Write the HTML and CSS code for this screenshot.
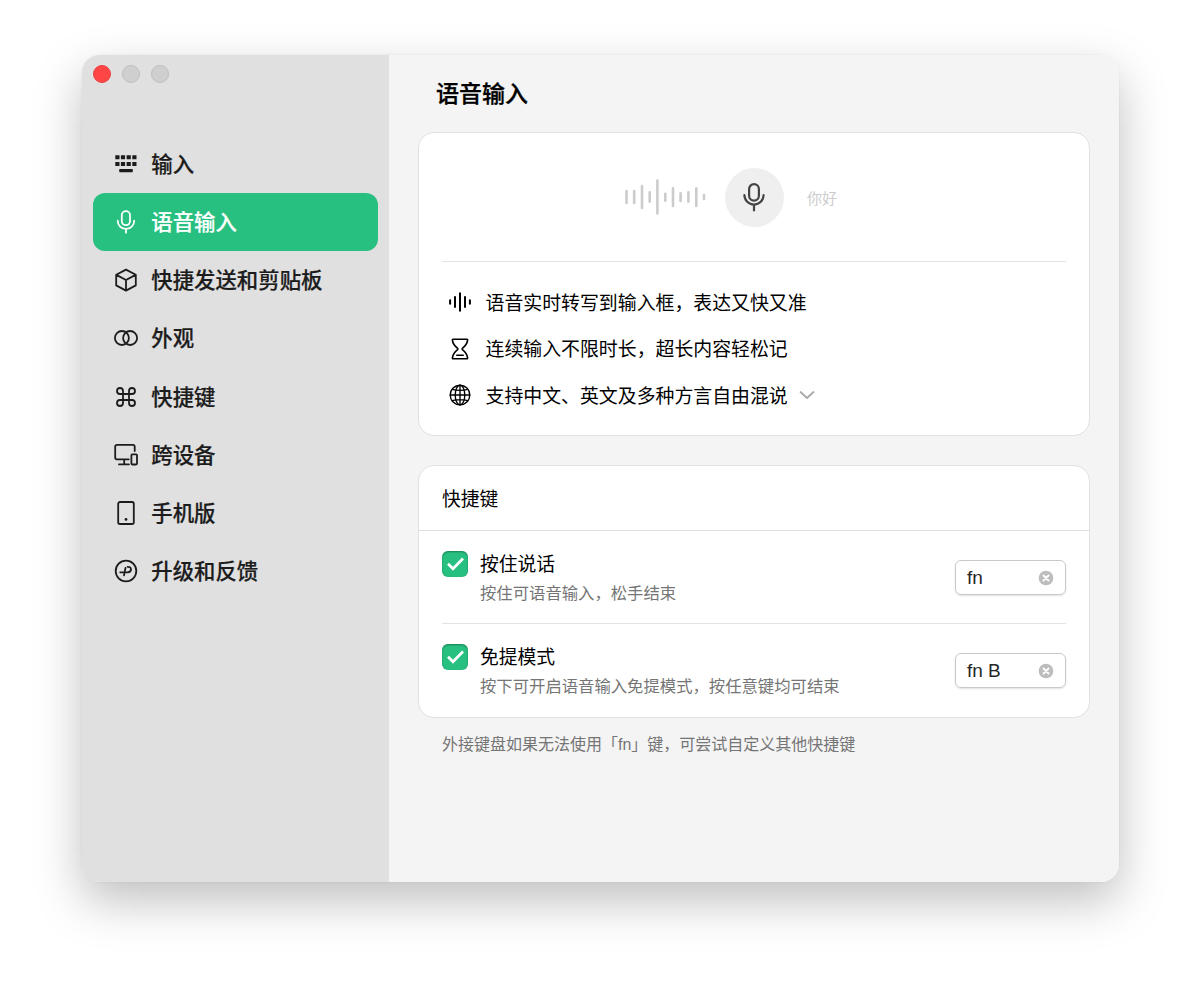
FILE: index.html
```html
<!DOCTYPE html>
<html lang="zh-CN">
<head>
  <meta charset="utf-8">
  <title>语音输入</title>
  <link rel="stylesheet" href="styles.css">
</head>
<body>
  <div class="window">
    <aside class="sidebar">
      <div class="lights">
        <span class="light close"></span>
        <span class="light"></span>
        <span class="light"></span>
      </div>
      <nav class="nav">
        <a class="nav-item">
          <svg class="icon solid" viewBox="0 0 24 24"><path d="M1.3 3.2h4.2v4H1.3zM6.9 3.2h4.2v4H6.9zM12.6 3.2h4.2v4h-4.2zM18.3 3.2h4.2v4h-4.2zM1.3 10h4.2v4H1.3zM6.9 10h4.2v4H6.9zM12.6 10h4.2v4h-4.2zM18.3 10h4.2v4h-4.2z"/><rect x="5.2" y="17" width="13.6" height="3.2" rx=".7"/></svg>
          <span>输入</span>
        </a>
        <a class="nav-item active">
          <svg class="icon" viewBox="0 0 24 24"><rect x="7.8" y="1.2" width="8.2" height="14" rx="4.1"/><path d="M3.7 10.7a8.25 8.25 0 0 0 16.5 0M12 19v3.7"/></svg>
          <span>语音输入</span>
        </a>
        <a class="nav-item">
          <svg class="icon" viewBox="0 0 24 24"><path d="M12 1.6l9.8 5.2v10.6L12 22.6l-9.8-5.2V6.8zM2.4 6.9L12 12l9.6-5.1M12 12v10.5"/></svg>
          <span>快捷发送和剪贴板</span>
        </a>
        <a class="nav-item">
          <svg class="icon" viewBox="0 0 24 24"><circle cx="7.9" cy="12" r="7"/><circle cx="16.1" cy="12" r="7"/></svg>
          <span>外观</span>
        </a>
        <a class="nav-item">
          <svg class="icon" viewBox="0 0 24 24"><path d="M9 9V6a3 3 0 1 0-3 3h12a3 3 0 1 0-3-3v12a3 3 0 1 0 3-3H6a3 3 0 1 0 3 3z"/></svg>
          <span>快捷键</span>
        </a>
        <a class="nav-item">
          <svg class="icon" viewBox="0 0 24 24"><path d="M20.7 8V3.6a1.8 1.8 0 0 0-1.8-1.8H3a1.8 1.8 0 0 0-1.8 1.8v10.9a1.8 1.8 0 0 0 1.8 1.8h11.8M10.2 16.3v5M5 21.4h9.9"/><rect x="17.4" y="11.3" width="5.6" height="10.2" rx=".9"/></svg>
          <span>跨设备</span>
        </a>
        <a class="nav-item">
          <svg class="icon" viewBox="0 0 24 24"><rect x="4.2" y="1" width="15.6" height="22" rx="1.8"/><circle class="dot" cx="12" cy="18.4" r="1.4"/></svg>
          <span>手机版</span>
        </a>
        <a class="nav-item">
          <svg class="icon" viewBox="0 0 24 24"><circle cx="12" cy="12" r="10.3"/><path d="M11.5 8.8L10 16.4M6.2 13.3h7.2c2.1 0 3.6-1.2 3.6-3s-1.5-2.6-3.4-2.5"/></svg>
          <span>升级和反馈</span>
        </a>
      </nav>
    </aside>

    <main class="content">
      <h1>语音输入</h1>

      <section class="card intro">
        <div class="demo">
          <svg class="wave" viewBox="0 0 84 40"><path d="M3.5 14v12M11.2 14v12M19 9v22M26.7 15.3v9.5M34.4 3.5v33M42.3 16.8v7M50 11.4v17.5M57.6 16.4v7.6M65.4 15.3v9.5M73.3 11.4v17.5M81 18v4"/></svg>
          <div class="mic">
            <svg viewBox="0 0 28 32"><rect x="9.1" y="3.2" width="9.8" height="16.4" rx="4.9"/><path d="M4.4 14a9.6 9.6 0 0 0 19.2 0M14 23.7v5.8"/></svg>
          </div>
          <span class="hello">你好</span>
        </div>
        <ul class="features">
          <li>
            <svg class="icon wavelet" viewBox="0 0 24 24"><path d="M2.1 10.2v3.6M7 7.1v9.8M12 3.2v17.6M17 7.1v9.8M21.9 10.2v3.6"/></svg>
            <span>语音实时转写到输入框，表达又快又准</span>
          </li>
          <li>
            <svg class="icon" viewBox="0 0 24 24"><path d="M5.2 2.2h13.6c.6 0 .9.4.8 1-.4 3.9-2 5.6-5.2 8.2-.4.4-.4.8 0 1.2 3.2 2.6 4.8 4.3 5.2 8.2.1.6-.2 1-.8 1H5.2c-.6 0-.9-.4-.8-1 .4-3.9 2-5.6 5.2-8.2.4-.4.4-.8 0-1.2-3.2-2.6-4.8-4.3-5.2-8.2-.1-.6.2-1 .8-1zM8.8 18.2h6.4"/></svg>
            <span>连续输入不限时长，超长内容轻松记</span>
          </li>
          <li>
            <svg class="icon globe" viewBox="0 0 24 24"><circle cx="12" cy="12" r="9.8"/><ellipse cx="12" cy="12" rx="4.8" ry="9.8"/><path d="M12 2.2v19.6M2.2 12h19.6M4.2 6.3c4.5 1.3 11.1 1.3 15.6 0M4.2 17.7c4.5-1.3 11.1-1.3 15.6 0"/></svg>
            <span>支持中文、英文及多种方言自由混说</span>
            <svg class="chevron" viewBox="0 0 16 10"><path d="M1.5 2L8 8l6.5-6"/></svg>
          </li>
        </ul>
      </section>

      <section class="card shortcuts">
        <h2>快捷键</h2>
        <div class="row">
          <span class="check"><svg viewBox="0 0 26 26"><path d="M6 12.8l5 5L21 7.5"/></svg></span>
          <div class="label">
            <h3>按住说话</h3>
            <p>按住可语音输入，松手结束</p>
          </div>
          <div class="key">
            <span>fn</span>
            <svg class="clear" viewBox="0 0 16 16"><circle cx="8" cy="8" r="7.3"/><path d="M5.5 5.5l5 5M10.5 5.5l-5 5"/></svg>
          </div>
        </div>
        <div class="row">
          <span class="check"><svg viewBox="0 0 26 26"><path d="M6 12.8l5 5L21 7.5"/></svg></span>
          <div class="label">
            <h3>免提模式</h3>
            <p>按下可开启语音输入免提模式，按任意键均可结束</p>
          </div>
          <div class="key">
            <span>fn B</span>
            <svg class="clear" viewBox="0 0 16 16"><circle cx="8" cy="8" r="7.3"/><path d="M5.5 5.5l5 5M10.5 5.5l-5 5"/></svg>
          </div>
        </div>
      </section>

      <p class="note">外接键盘如果无法使用「fn」键，可尝试自定义其他快捷键</p>
    </main>
  </div>
</body>
</html>
```
FILE: styles.css
```css
* {
  box-sizing: border-box;
  margin: 0;
  padding: 0;
}
body {
  min-height: 991px;
  background: #fff;
  padding: 55px 81px 0 82px;
  font-family: "Liberation Sans", "Noto Sans CJK SC", sans-serif;
  color: #000;
}
svg {
  display: block;
  flex: none;
  fill: none;
  stroke: currentColor;
  stroke-width: 1.8;
  stroke-linecap: round;
  stroke-linejoin: round;
}
.icon {
  width: 24px;
  height: 24px;
}
.solid {
  fill: currentColor;
  stroke: none;
}
.dot {
  fill: currentColor;
  stroke: none;
}

.window {
  display: flex;
  height: 827px;
  border-radius: 18px;
  overflow: hidden;
  box-shadow: 0 19px 48px rgba(0, 0, 0, .25), 0 0 2px rgba(0, 0, 0, .08);
}

/* sidebar */
.sidebar {
  width: 307px;
  flex: none;
  padding: 10px 11px;
  background: #e0e0e0;
}
.lights {
  display: flex;
  gap: 11px;
  margin-bottom: 52px;
}
.light {
  width: 18px;
  height: 18px;
  border: 1px solid #bebebe;
  border-radius: 50%;
  background: #cfcfcf;
}
.light.close {
  border-color: #ec3f3f;
  background: #ff4645;
}
.nav-item {
  display: flex;
  align-items: center;
  gap: 13px;
  height: 58.15px;
  padding-left: 21.3px;
  border-radius: 12px;
  font-size: 21.4px;
  font-weight: 500;
  line-height: 30px;
  color: #1c1c1c;
  -webkit-text-stroke: .2px;
}
.nav-item span {
  padding-top: 2px;
}
.nav-item.active {
  background: #27c080;
  color: #fff;
}

/* content */
.content {
  flex: 1;
  padding: 0 29px;
  background: #f4f4f4;
}
h1 {
  height: 77px;
  padding-left: 18px;
  font-size: 23px;
  font-weight: 500;
  line-height: 78px;
  -webkit-text-stroke: .3px;
}
.card {
  border: 1px solid #e1e1e1;
  border-radius: 16px;
  background: #fff;
}
.intro {
  height: 304px;
  padding: 0 23px;
}
.demo {
  display: flex;
  align-items: center;
  justify-content: center;
  height: 129px;
  padding-right: 48px;
  border-bottom: 1px solid #e3e3e3;
  color: #ccc;
}
.wave {
  width: 84px;
  height: 40px;
  margin-right: 18px;
  stroke-width: 2.6;
}
.mic {
  display: grid;
  place-items: center;
  width: 59px;
  height: 59px;
  margin-right: 23px;
  border-radius: 50%;
  background: #efefef;
  color: #444;
}
.mic svg {
  width: 28px;
  height: 32px;
  stroke-width: 2.2;
}
.hello {
  font-size: 15px;
}
.features {
  padding: 17px 0 0 5.5px;
  list-style: none;
}
.features li {
  display: flex;
  align-items: center;
  gap: 14px;
  height: 46.5px;
  font-size: 18.9px;
}
.features span {
  padding-bottom: 2px;
}
.features .icon {
  stroke-width: 1.6;
}
.features .wavelet {
  stroke-width: 2;
}
.features .globe {
  stroke-width: 1.35;
}
.chevron {
  width: 16px;
  height: 10px;
  margin-left: -3px;
  color: #aaa;
}

/* shortcuts */
.shortcuts {
  margin-top: 29px;
  height: 253px;
}
h2 {
  height: 65px;
  padding-left: 23px;
  border-bottom: 1px solid #dfdfdf;
  font-size: 18.8px;
  font-weight: 400;
  line-height: 67px;
}
.row {
  display: flex;
  height: 92px;
  margin: 0 23px;
  padding-top: 20px;
}
.row + .row {
  height: 93px;
  border-top: 1px solid #e3e3e3;
}
.check {
  width: 26px;
  height: 26px;
  border-radius: 6px;
  background: #27c080;
  box-shadow: inset 0 1px 2px rgba(0, 0, 0, .35);
  color: #fff;
}
.check svg {
  stroke-width: 2.7;
  stroke-linecap: butt;
  stroke-linejoin: miter;
}
.label {
  flex: 1;
  margin-left: 12px;
}
h3 {
  font-size: 18.8px;
  font-weight: 400;
  line-height: 28px;
}
.label p {
  color: #757575;
  font-size: 16.35px;
  line-height: 29px;
}
.key {
  display: flex;
  align-items: center;
  justify-content: space-between;
  width: 111px;
  height: 35px;
  margin-top: 9px;
  padding: 0 11px;
  border: 1px solid #c9c9c9;
  border-radius: 6px;
  box-shadow: 0 1px 2px rgba(0, 0, 0, .12);
  font-size: 19px;
  color: #262626;
}
.clear {
  width: 16px;
  height: 16px;
}
.clear circle {
  fill: #bdbdbd;
  stroke: none;
}
.clear path {
  stroke: #fff;
}
.note {
  margin-top: 13px;
  padding-left: 24px;
  color: #757575;
  font-size: 16px;
  line-height: 28px;
}
```
